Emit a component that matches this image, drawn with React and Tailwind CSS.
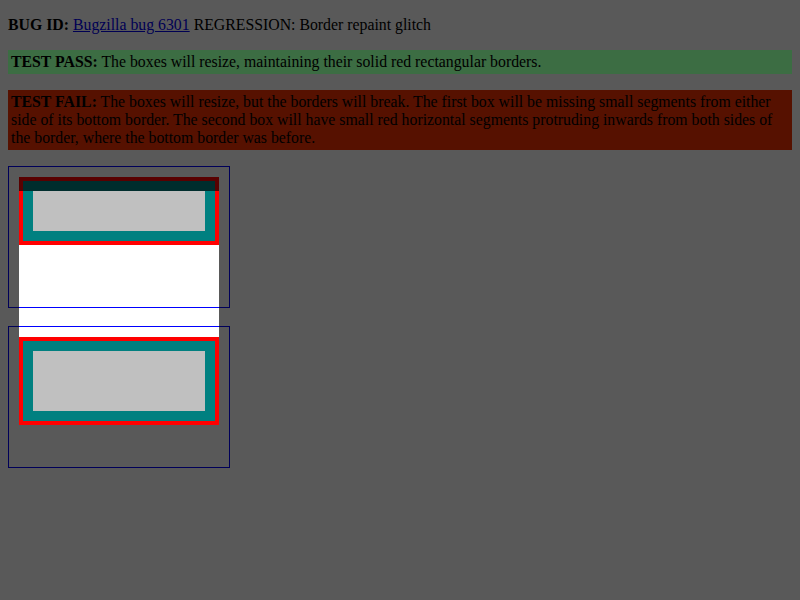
import React from 'react';

const RedBox = ({ tall = false }) => (
    <div className={`w-[200px] ${tall ? 'h-[88px]' : 'h-[68px]'} border-4 border-[#ff0000] bg-[#008080] p-[10px] box-border`}>
        <div className="w-full h-full bg-[#c0c0c0]" />
    </div>
);

const TestBox = ({ className = '', tall = false }) => (
    <div className={`w-[222px] h-[142px] border border-[#0000ff] p-[10px] box-border ${className}`}>
        <RedBox tall={tall} />
    </div>
);

export default function App() {
    return (
        <div
            className="relative h-[600px] w-[800px] overflow-hidden bg-white p-2 text-[15.8px] leading-[18px] text-black"
            style={{ fontFamily: '"Liberation Serif", "Times New Roman", serif' }}
        >
            <p className="mt-2 mb-4">
                <b>BUG ID:</b>{' '}
                <a href="#" className="text-[#0000ee] underline">Bugzilla bug 6301</a>{' '}
                REGRESSION: Border repaint glitch
            </p>

            <p className="relative z-10 mb-4 bg-[#3c6d43] p-[3px]">
                <b>TEST PASS:</b> The boxes will resize, maintaining their solid red rectangular borders.
            </p>

            <p className="relative z-10 mb-4 bg-[#561100] p-[3px]">
                <b>TEST FAIL:</b> The boxes will resize, but the borders will break. The first box will be
                missing small segments from either side of its bottom border. The second box will have small
                red horizontal segments protruding inwards from both sides of the border, where the bottom
                border was before.
            </p>

            <TestBox />
            <TestBox className="mt-[18px]" tall />

            {/* repaint spotlight: everything outside is dimmed */}
            <div className="pointer-events-none absolute left-[19px] top-[191px] h-[234px] w-[200px] shadow-[0_0_0_2000px_rgba(0,0,0,0.65)]" />
        </div>
    );
}
